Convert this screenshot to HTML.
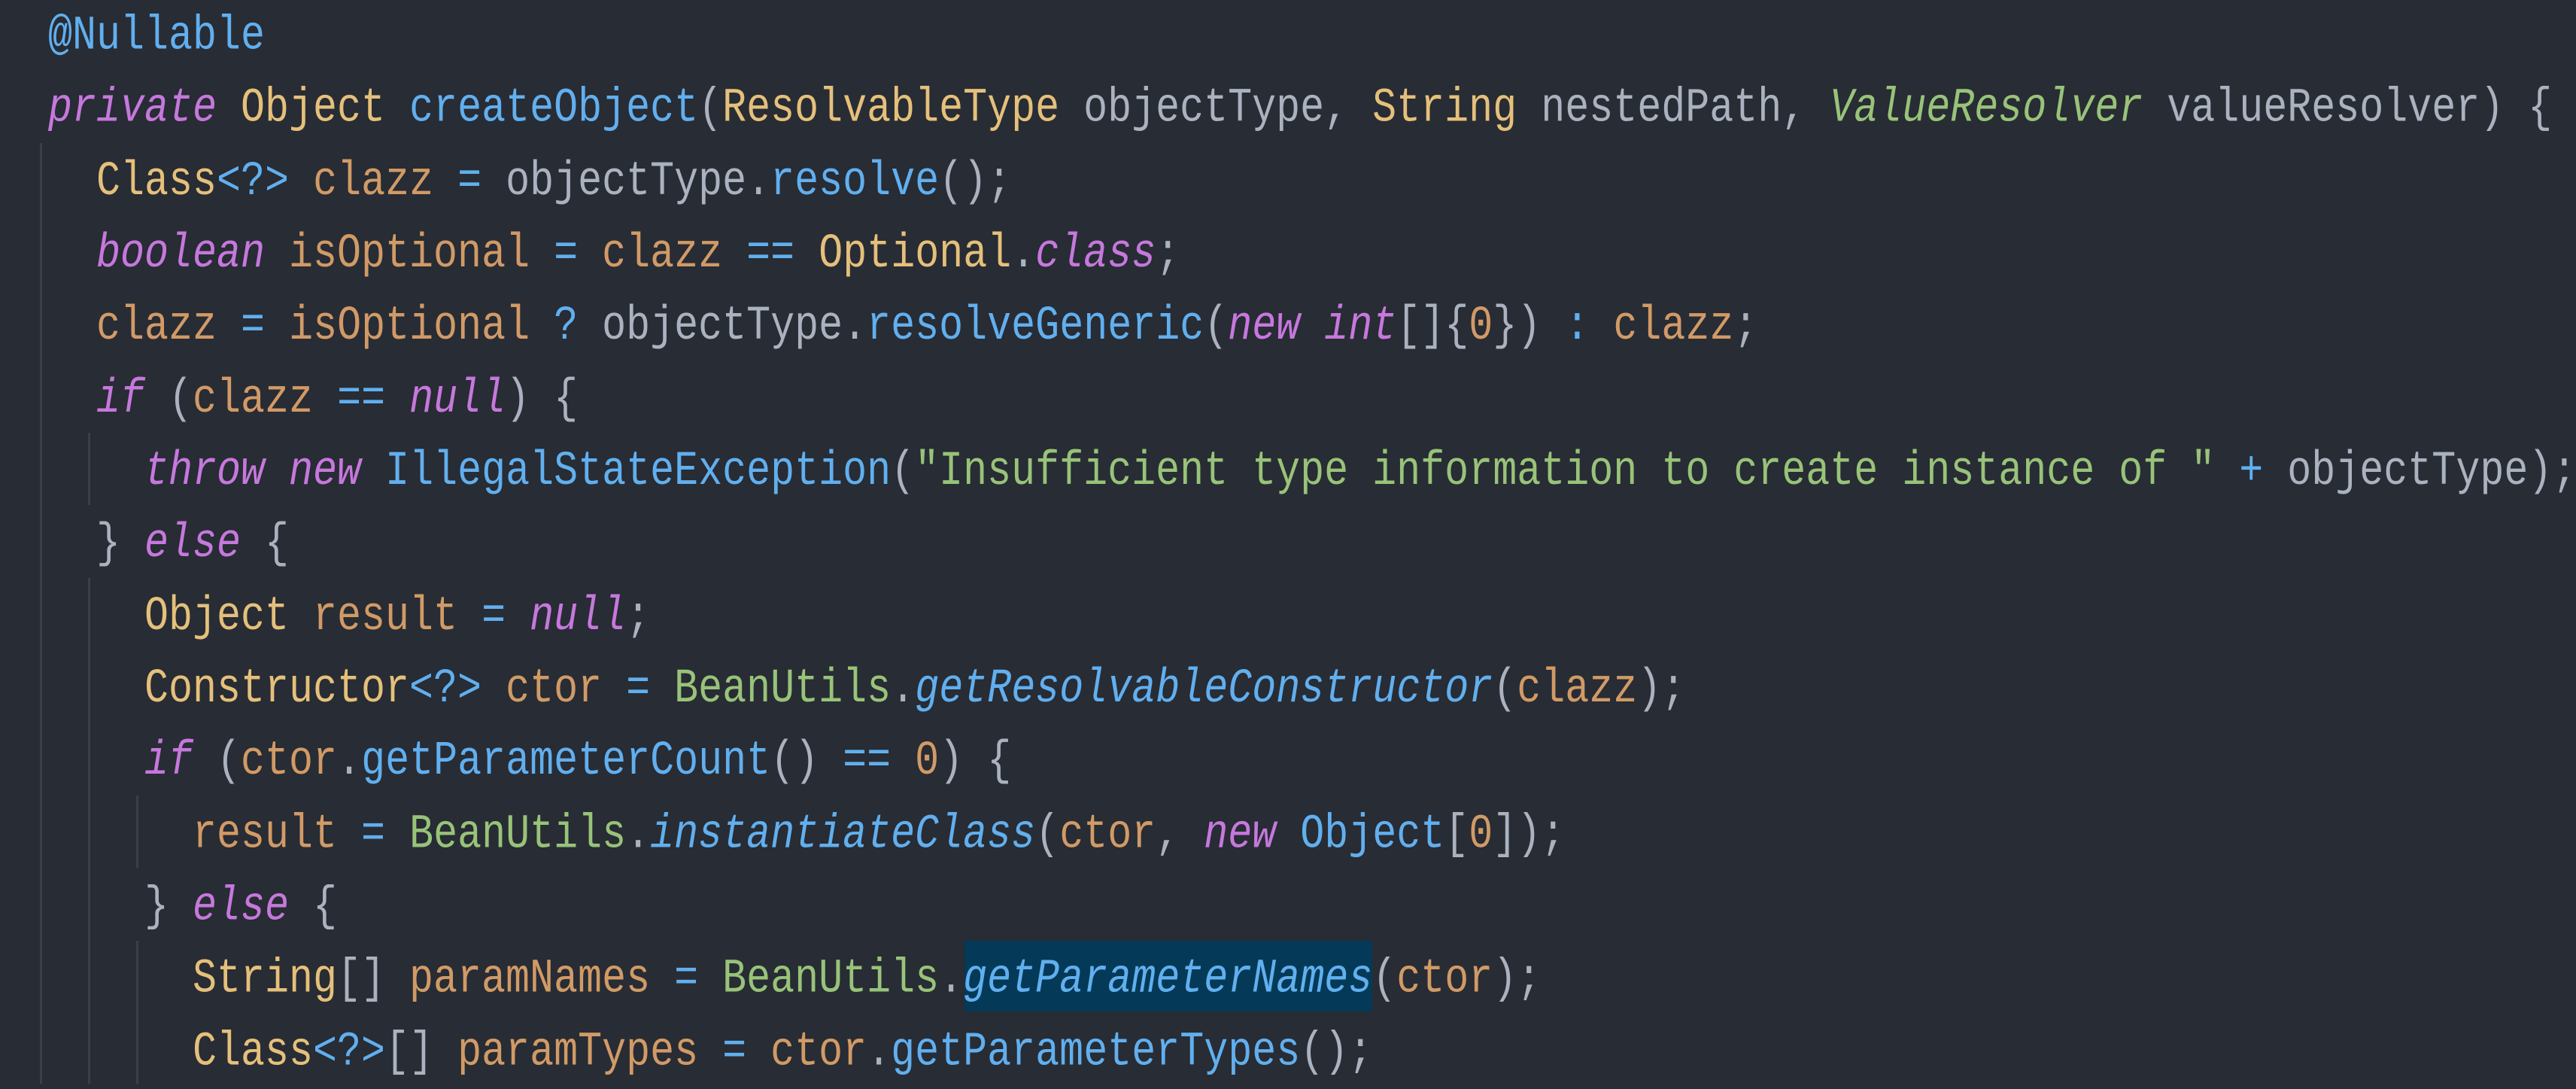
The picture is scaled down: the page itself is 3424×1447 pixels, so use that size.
<!DOCTYPE html>
<html><head><meta charset="utf-8"><style>
html,body{margin:0;padding:0;background:#282c34;width:3424px;height:1440px;overflow:hidden}
.code{position:absolute;left:64px;top:1px;font-family:"Liberation Mono",monospace;font-size:53.33px;line-height:80.35px;white-space:pre;color:#abb2bf;transform:scaleY(1.2);transform-origin:0 0}
.k{color:#c678dd;font-style:italic}
.t{color:#e5c07b}
.f{color:#61afef}
.fi{color:#61afef;font-style:italic}
.v{color:#d19a66}
.s{color:#98c379}
.g{color:#98c379}
.gi{color:#98c379;font-style:italic}
.o{color:#61afef}
.n{color:#d19a66}
.hl{background:#043a57}
.guide{position:absolute;width:3px;background:#3a3f4a}
</style></head><body>
<div class="guide" style="left:53px;top:190px;height:1250px"></div>
<div class="guide" style="left:117px;top:575px;height:96px"></div>
<div class="guide" style="left:117px;top:768px;height:672px"></div>
<div class="guide" style="left:181px;top:1057px;height:96px"></div>
<div class="guide" style="left:181px;top:1250px;height:190px"></div>
<div class="hl" style="position:absolute;left:1282px;top:1250px;width:542px;height:94px"></div>
<div class="code"><span class="f">@Nullable</span>
<span class="k">private</span> <span class="t">Object</span> <span class="f">createObject</span>(<span class="t">ResolvableType</span> objectType, <span class="t">String</span> nestedPath, <span class="gi">ValueResolver</span> valueResolver) {
  <span class="t">Class</span><span class="o">&lt;?&gt;</span> <span class="v">clazz</span> <span class="o">=</span> objectType.<span class="f">resolve</span>();
  <span class="k">boolean</span> <span class="v">isOptional</span> <span class="o">=</span> <span class="v">clazz</span> <span class="o">==</span> <span class="t">Optional</span>.<span class="k">class</span>;
  <span class="v">clazz</span> <span class="o">=</span> <span class="v">isOptional</span> <span class="o">?</span> objectType.<span class="f">resolveGeneric</span>(<span class="k">new</span> <span class="k">int</span>[]{<span class="n">0</span>}) <span class="o">:</span> <span class="v">clazz</span>;
  <span class="k">if</span> (<span class="v">clazz</span> <span class="o">==</span> <span class="k">null</span>) {
    <span class="k">throw</span> <span class="k">new</span> <span class="f">IllegalStateException</span>(<span class="s">"Insufficient type information to create instance of "</span> <span class="o">+</span> objectType);
  } <span class="k">else</span> {
    <span class="t">Object</span> <span class="v">result</span> <span class="o">=</span> <span class="k">null</span>;
    <span class="t">Constructor</span><span class="o">&lt;?&gt;</span> <span class="v">ctor</span> <span class="o">=</span> <span class="g">BeanUtils</span>.<span class="fi">getResolvableConstructor</span>(<span class="v">clazz</span>);
    <span class="k">if</span> (<span class="v">ctor</span>.<span class="f">getParameterCount</span>() <span class="o">==</span> <span class="n">0</span>) {
      <span class="v">result</span> <span class="o">=</span> <span class="g">BeanUtils</span>.<span class="fi">instantiateClass</span>(<span class="v">ctor</span>, <span class="k">new</span> <span class="f">Object</span>[<span class="n">0</span>]);
    } <span class="k">else</span> {
      <span class="t">String</span>[] <span class="v">paramNames</span> <span class="o">=</span> <span class="g">BeanUtils</span>.<span class="fi">getParameterNames</span>(<span class="v">ctor</span>);
      <span class="t">Class</span><span class="o">&lt;?&gt;</span>[] <span class="v">paramTypes</span> <span class="o">=</span> <span class="v">ctor</span>.<span class="f">getParameterTypes</span>();
</div>
</body></html>
